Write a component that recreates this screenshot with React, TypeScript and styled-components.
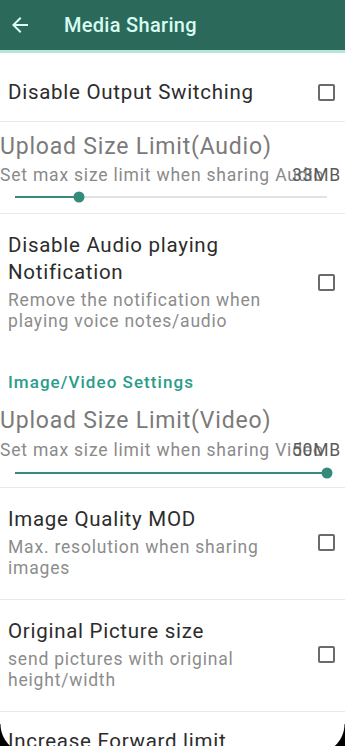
import React from "react";
import styled, { createGlobalStyle } from "styled-components";

const Global = createGlobalStyle`
  html, body { margin: 0; padding: 0; background: #ffffff; }
  body { font-family: Roboto, "Noto Sans", Arial, sans-serif; overflow: hidden; }
  #root { width: 345px; height: 746px; overflow: hidden; position: relative; }
`;

const Screen = styled.div`
  width: 345px;
  height: 746px;
  display: flex;
  flex-direction: column;
  overflow: hidden;
  background: #fff;
`;

const Header = styled.header`
  height: 50px;
  flex: none;
  background: #2b6a5b;
  border-bottom: 3px solid #b9e6dc;
  display: flex;
  align-items: center;
  padding-left: 8px;
  gap: 32px;
  box-sizing: content-box;
`;

const BackBtn = styled.div`
  width: 24px;
  height: 24px;
  display: flex;
  align-items: center;
  justify-content: center;
  color: #dcfbf2;
`;

const Title = styled.h1`
  margin: 0;
  font-size: 20px;
  font-weight: 500;
  letter-spacing: 0.3px;
  color: #d8fbf1;
`;

const List = styled.div`
  display: flex;
  flex-direction: column;
`;

const Divider = styled.div`
  height: 1px;
  background: #e9e9e9;
  flex: none;
`;

const CheckRow = styled.div<{ $top?: number; $bottom?: number; $minH?: number }>`
  display: flex;
  align-items: center;
  padding: ${(p) => p.$top ?? 18}px 10px ${(p) => p.$bottom ?? 20}px 8px;
  gap: 12px;
  min-height: ${(p) => p.$minH ?? 0}px;
`;

const TextCol = styled.div<{ $alignTop?: boolean }>`
  flex: 1;
  display: flex;
  flex-direction: column;
  align-self: ${(p) => (p.$alignTop ? "flex-start" : "auto")};
`;

const RowTitle = styled.div`
  font-size: 20.5px;
  line-height: 27px;
  letter-spacing: 0.72px;
  color: #2c2c2c;
`;

const RowSub = styled.div`
  margin-top: 4px;
  font-size: 17.5px;
  line-height: 21px;
  letter-spacing: 0.8px;
  color: #8c8c8c;
`;

const Box = styled.div`
  width: 13px;
  height: 13px;
  border: 2px solid #6a6a6a;
  border-radius: 2px;
  flex: none;
`;

const SliderRow = styled.div<{ $bottom: number }>`
  position: relative;
  display: flex;
  flex-direction: column;
  padding: 10px 0 ${(p) => p.$bottom}px 0;
`;

const SliderTitle = styled.div`
  font-size: 23px;
  line-height: 30px;
  letter-spacing: 0.8px;
  color: #7a7a7a;
  white-space: nowrap;
`;

const SliderSubLine = styled.div<{ $gap: number }>`
  position: relative;
  margin-top: ${(p) => p.$gap}px;
  height: 22px;
`;

const SliderSub = styled.div`
  font-size: 17.5px;
  line-height: 22px;
  letter-spacing: 0.8px;
  color: #8a8a8a;
  white-space: nowrap;
  overflow: hidden;
`;

const Value = styled.div`
  position: absolute;
  right: 4px;
  top: 0;
  font-size: 17.5px;
  line-height: 22px;
  letter-spacing: 0.8px;
  color: #5a5a5a;
`;

const Track = styled.div<{ $gap: number }>`
  height: 20px;
  margin: ${(p) => p.$gap}px 18px 0 15px;
  position: relative;
  display: flex;
  align-items: center;
`;

const TrackBg = styled.div`
  width: 100%;
  height: 2px;
  background: #e2e2e2;
  position: relative;
`;

const TrackFill = styled.div`
  position: absolute;
  left: 0;
  top: 0;
  height: 2px;
  background: #3a8a7b;
`;

const Thumb = styled.div`
  position: absolute;
  top: 50%;
  width: 11px;
  height: 11px;
  border-radius: 50%;
  background: #348b79;
  transform: translate(-50%, -50%);
`;

const Category = styled.div`
  padding: 19px 8px 3px 8px;
  font-size: 17px;
  line-height: 22px;
  font-weight: 500;
  letter-spacing: 1.05px;
  color: #2c9c8a;
`;

const Corner = styled.div<{ $side: "left" | "right" }>`
  position: fixed;
  bottom: -8px;
  ${(p) => p.$side}: 0;
  width: 30px;
  height: 30px;
  pointer-events: none;
  background: radial-gradient(
    circle at ${(p) => (p.$side === "left" ? "100% 0" : "0 0")},
    transparent 29px,
    #000 30px
  );
`;

function Checkbox() {
  return <Box />;
}

function Slider({
  title,
  sub,
  value,
  pct,
  subGap,
  trackGap,
  bottom,
}: {
  title: string;
  sub: string;
  value: string;
  pct: number;
  subGap: number;
  trackGap: number;
  bottom: number;
}) {
  return (
    <SliderRow $bottom={bottom}>
      <SliderTitle>{title}</SliderTitle>
      <SliderSubLine $gap={subGap}>
        <SliderSub>{sub}</SliderSub>
        <Value>{value}</Value>
      </SliderSubLine>
      <Track $gap={trackGap}>
        <TrackBg>
          <TrackFill style={{ width: `${pct}%` }} />
        </TrackBg>
        <Thumb style={{ left: `${pct}%` }} />
      </Track>
    </SliderRow>
  );
}

export default function App() {
  return (
    <>
      <Global />
      <Screen>
        <Header>
          <BackBtn>
            <svg width="24" height="24" viewBox="0 0 24 24" fill="currentColor">
              <path d="M20 11H7.83l5.59-5.59L12 4l-8 8 8 8 1.41-1.41L7.83 13H20v-2z" />
            </svg>
          </BackBtn>
          <Title>Media Sharing</Title>
        </Header>
        <List>
          <CheckRow $top={26} $bottom={15}>
            <TextCol>
              <RowTitle>Disable Output Switching</RowTitle>
            </TextCol>
            <Checkbox />
          </CheckRow>
          <Divider />
          <Slider
            title="Upload Size Limit(Audio)"
            sub="Set max size limit when sharing Audio"
            value="33MB"
            pct={20.5}
            subGap={2}
            trackGap={1}
            bottom={6}
          />
          <Divider />
          <CheckRow>
            <TextCol>
              <RowTitle>
                Disable Audio playing
                <br />
                Notification
              </RowTitle>
              <RowSub>
                Remove the notification when
                <br />
                playing voice notes/audio
              </RowSub>
            </TextCol>
            <Checkbox />
          </CheckRow>
          <Category>Image/Video Settings</Category>
          <Slider
            title="Upload Size Limit(Video)"
            sub="Set max size limit when sharing Video"
            value="50MB"
            pct={100}
            subGap={3}
            trackGap={2}
            bottom={4}
          />
          <Divider />
          <CheckRow>
            <TextCol>
              <RowTitle>Image Quality MOD</RowTitle>
              <RowSub>
                Max. resolution when sharing
                <br />
                images
              </RowSub>
            </TextCol>
            <Checkbox />
          </CheckRow>
          <Divider />
          <CheckRow>
            <TextCol>
              <RowTitle>Original Picture size</RowTitle>
              <RowSub>
                send pictures with original
                <br />
                height/width
              </RowSub>
            </TextCol>
            <Checkbox />
          </CheckRow>
          <Divider />
          <CheckRow $top={16} $minH={90}>
            <TextCol $alignTop>
              <RowTitle>Increase Forward limit</RowTitle>
            </TextCol>
            <Checkbox />
          </CheckRow>
        </List>
      </Screen>
      <Corner $side="left" />
      <Corner $side="right" />
    </>
  );
}
